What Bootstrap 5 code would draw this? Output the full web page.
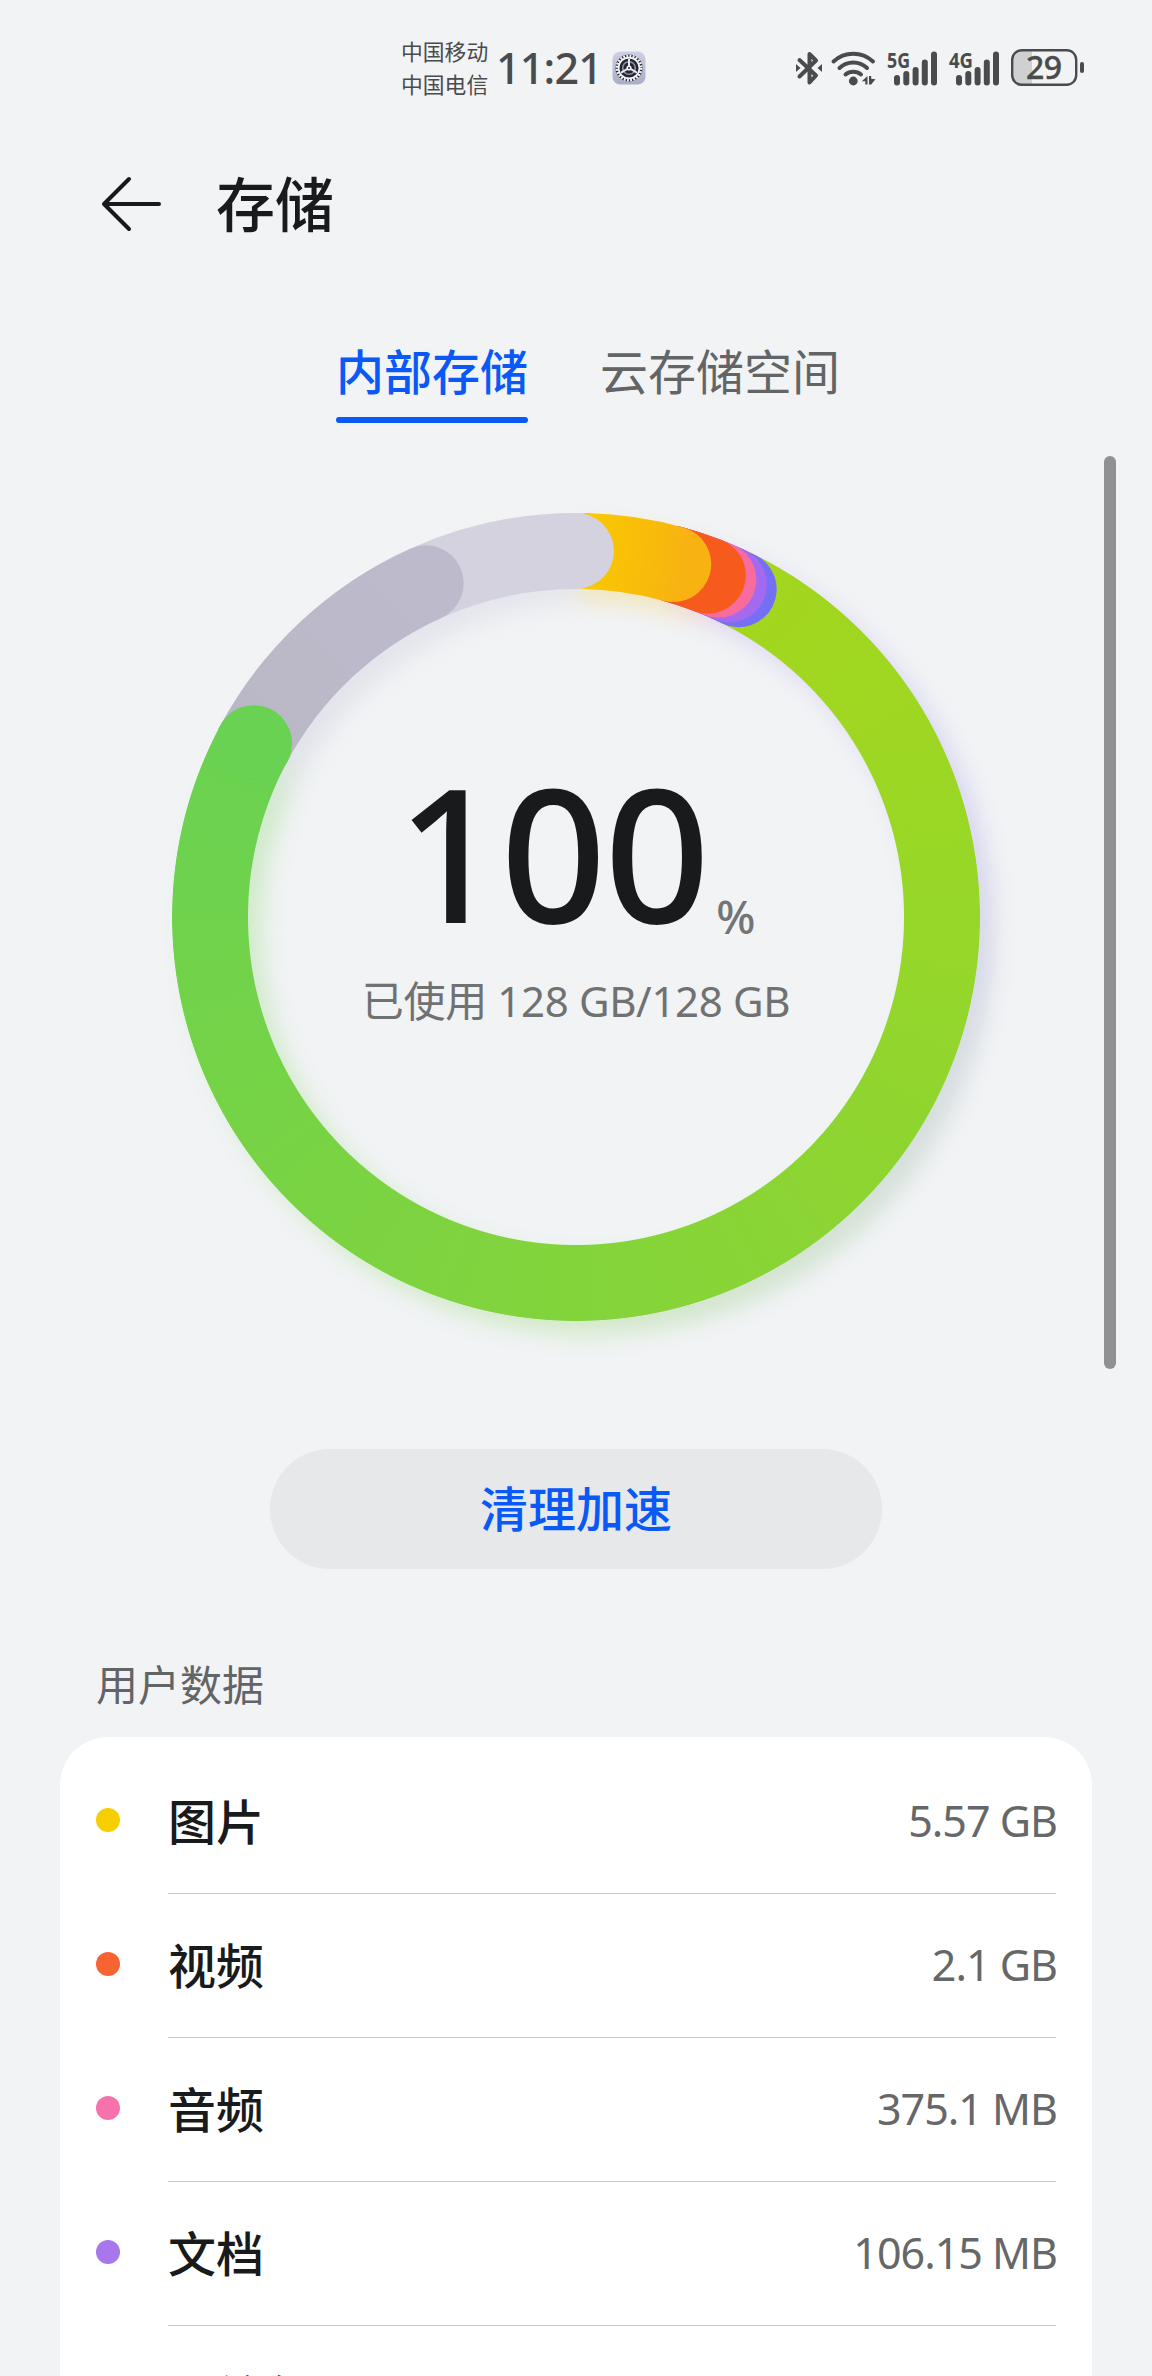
<!DOCTYPE html>
<html lang="zh-CN">
<head>
<meta charset="utf-8">
<meta name="viewport" content="width=device-width, initial-scale=1">
<title>存储</title>
<link href="https://cdn.jsdelivr.net/npm/bootstrap@5.3.0/dist/css/bootstrap.min.css" rel="stylesheet">
<style>
  body { background:#f1f3f5; font-family:"Noto Sans","Noto Sans CJK SC",sans-serif; color:#191a1b; }
  .phone { width:1152px; height:2376px; overflow:hidden; }
  .status { height:136px; padding:0 66px 0 401px; color:#4a4b4c; }
  .status svg { overflow:visible; }
  .carriers { font-size:21.8px; line-height:33px; width:90px; }
  .clock { font-size:43px; line-height:60px; font-weight:500; width:100px; margin-left:5px; letter-spacing:-.8px; }
  .title-bar { height:136px; padding-left:100px; }
  .title-bar h1 { font-size:59px; line-height:80px; font-weight:500; margin-left:53px; }
  .tabs { height:151px; padding:64px 0 0 336px; gap:72px; font-size:48px; line-height:72px; color:#626466; }
  .tabs .nav-link { padding:0; color:inherit; height:87px; }
  .tabs .nav-link.active { color:#0a59f7; font-weight:500; }
  .tabs .nav-link.active::after { content:""; display:block; height:6px; border-radius:3px; background:#0a59f7; margin-top:9px; }
  .chart-area { height:1026px; padding-top:90px; }
  .ring { width:808px; height:808px; }
  .ring-layer { inset:0; }
  .ring-mask { -webkit-mask:radial-gradient(circle at center,transparent 327.5px,#000 328.5px,#000 403.5px,transparent 404.3px); mask:radial-gradient(circle at center,transparent 327.5px,#000 328.5px,#000 403.5px,transparent 404.3px); }
  .ring-green { background:conic-gradient(transparent 24deg,#a4d61c 24deg,#9fd722 55deg,#97d728 90deg,#90d52f 120deg,#83d43b 180deg,#76d346 240deg,#6ad252 298deg,transparent 298.3deg); }
  .glow { filter:blur(11px); transform:translate(14px,14px); opacity:.25; }
  .glow-fill { height:100%; background:conic-gradient(#f6c21a 0deg,#f6c21a 12deg,#f78a5a 17deg,#a88af0 23deg,#8f80e0 75deg,#8c90c0 95deg,#86a09c 115deg,#7cb46a 145deg,#78d040 185deg,#70d24c 290deg,#b8b5cc 302deg,#c4c2d2 357deg,#f6c21a 360deg); }
  .used-block { padding-top:238px; }
  .used-number { font-size:185px; line-height:200px; font-weight:500; letter-spacing:-2px; }
  .percent { font-size:46px; line-height:60px; color:#737475; font-weight:500; margin:0 0 5px 8px; }
  .used-text { font-size:42px; line-height:60px; color:#707172; white-space:nowrap; margin-top:20px; letter-spacing:-.35px; }
  .scroll-thumb { width:12px; height:913px; border-radius:6px; background:#909193; right:36px; top:33px; }
  .btn-clean { width:612px; height:120px; font-size:48px; font-weight:500; color:#0a59f7; background:#e6e8ea; border:0; }
  .btn-clean:hover { color:#0a59f7; background:#dfe1e3; }
  .section-label { height:168px; padding:84px 0 0 96px; font-size:42px; line-height:64px; color:#626466; }
  .data-card { margin:0 60px; border:0; border-radius:48px; padding:12px 36px 0; height:800px; }
  .data-row { height:144px; }
  .dot { width:24px; height:24px; border-radius:50%; margin-right:48px; transform:translateY(-1px); }
  .row-body { height:144px; border-bottom:1px solid #c9cacc; position:relative; top:1px; font-size:48px; }
  .row-name { font-weight:500; }
  .row-value { font-size:43px; color:#666768; letter-spacing:-1px; margin-right:-1px; }
</style>
</head>
<body>
<div class="phone">

  <div class="status d-flex align-items-center">
    <div class="carriers">中国移动<br>中国电信</div>
    <div class="clock">11:21</div>
    <svg class="ms-3" width="34" height="34" viewBox="0 0 34 34">
      <defs><linearGradient id="app" x1="0" y1="0" x2="0" y2="1"><stop offset="0" stop-color="#cdd0e6"/><stop offset="1" stop-color="#a9adc9"/></linearGradient></defs>
      <rect x=".5" y=".5" width="33" height="33" rx="8" fill="url(#app)"/>
      <circle cx="17" cy="17" r="13.600" fill="#25262f"/>
      <circle cx="17" cy="17" r="12.200" fill="none" stroke="#f4f5fb" stroke-width="2.600" stroke-dasharray="1.900 1.300"/>
      <circle cx="17" cy="17" r="10.400" fill="none" stroke="#f4f5fb" stroke-width="1.600"/>
      <circle cx="17" cy="17" r="6.300" fill="none" stroke="#8f92a8" stroke-width="1.600"/>
      <path d="M17 17V7.500M17 17l-8 4.600M17 17l8 4.600" stroke="#e8e9f2" stroke-width="2"/>
      <circle cx="17" cy="17" r="2.600" fill="#f4f5fb"/><circle cx="17" cy="17" r="1" fill="#25262f"/>
    </svg>

    <div class="ms-auto d-flex align-items-center">
      <svg width="26" height="36" viewBox="0 0 26 36" fill="none" stroke="#4a4b4c" stroke-width="4" stroke-linejoin="round" stroke-linecap="round">
        <path d="M3.500 10 20 25.500 13.500 32.500V4l6.500 6.500L3.500 26.500"/>
        <path d="M0 14v8l4.500-4zM26 14v8l-4.500-4z" fill="#4a4b4c" stroke="none"/>
      </svg>
      <svg style="margin-left:9px" width="46" height="36" viewBox="0 0 46 36" fill="none" stroke="#4a4b4c" stroke-width="4" stroke-linecap="round">
        <path d="M2.500 11.500a29 29 0 0 1 39.500 0M8.500 18a20 20 0 0 1 27.500 0M14.500 24.500a12 12 0 0 1 15.500 0"/>
        <circle cx="22.300" cy="31" r="4.400" fill="#4a4b4c" stroke="none"/>
        <path d="M36.500 26v8.500h-2.200v-3.200h-3.500zM38 34.500V26h2.200v2.800l4.300.4-4.300 5.300z" fill="#4a4b4c" stroke="none"/>
      </svg>
      <svg style="margin-left:10px" width="54" height="36" viewBox="0 0 54 36" fill="#4a4b4c">
        <text x="0" y="18" font-family="Noto Sans" font-weight="700" font-size="21" textLength="23" lengthAdjust="spacingAndGlyphs">5G</text>
        <rect x="7" y="25" width="6" height="10.500" rx="3"/><rect x="16.300" y="21" width="6" height="14.500" rx="3"/><rect x="25.600" y="17" width="6" height="18.500" rx="3"/><rect x="34.800" y="9.500" width="6" height="26" rx="3"/><rect x="44" y="1.500" width="6" height="34" rx="3"/>
      </svg>
      <svg style="margin-left:8px" width="54" height="36" viewBox="0 0 54 36" fill="#4a4b4c">
        <text x="0" y="18" font-family="Noto Sans" font-weight="700" font-size="21" textLength="24" lengthAdjust="spacingAndGlyphs">4G</text>
        <rect x="7" y="25" width="6" height="10.500" rx="3"/><rect x="16.300" y="21" width="6" height="14.500" rx="3"/><rect x="25.600" y="17" width="6" height="18.500" rx="3"/><rect x="34.800" y="9.500" width="6" height="26" rx="3"/><rect x="44" y="1.500" width="6" height="34" rx="3"/>
      </svg>
      <svg style="margin-left:8px" width="75" height="38" viewBox="0 0 75 38">
        <path d="M11 1.500h10v34H11a9.500 9.500 0 0 1-9.500-9.500V11A9.500 9.500 0 0 1 11 1.500z" fill="#cfd0d2"/>
        <rect x="1.200" y="1.200" width="64" height="34.600" rx="9.500" fill="none" stroke="#4a4b4c" stroke-width="2.400"/>
        <rect x="69" y="13" width="4" height="11" rx="2" fill="#4a4b4c"/>
        <text x="15" y="30" font-family="Noto Sans" font-weight="500" font-size="32" fill="#4a4b4c" stroke="#4a4b4c" stroke-width=".4" textLength="36">29</text>
      </svg>
    </div>
  </div>

  <header class="title-bar d-flex align-items-center">
    <svg width="63" height="58" viewBox="0 0 63 58" fill="none" stroke="#191a1b" stroke-width="4" stroke-linecap="round" stroke-linejoin="round"><path d="M59 29H4L29 4M4 29l25 25"/></svg>
    <h1 class="mb-0">存储</h1>
  </header>

  <nav class="tabs nav flex-nowrap">
    <a class="nav-link active" href="#">内部存储</a>
    <a class="nav-link" href="#">云存储空间</a>
  </nav>

  <main class="chart-area position-relative">
    <div class="ring position-relative mx-auto">
      <div class="ring-layer position-absolute glow"><div class="glow-fill ring-mask"></div></div>
      <div class="ring-layer position-absolute ring-green ring-mask"></div>
      <svg class="ring-layer position-absolute" width="808" height="808" viewBox="-404 -404 808 808" fill="none" stroke-width="76">
        <defs>
          <linearGradient id="yel" gradientUnits="userSpaceOnUse" x1="0" y1="-366" x2="110" y2="-350"><stop offset=".1" stop-color="#f9c900"/><stop offset="1" stop-color="#f8b212"/></linearGradient>
          <linearGradient id="dark" gradientUnits="userSpaceOnUse" x1="-322" y1="-173" x2="-150" y2="-334"><stop offset="0" stop-color="#bab7c6"/><stop offset="1" stop-color="#bdbacc"/></linearGradient>
        </defs>
        <g stroke-linecap="round">
          <path d="M97.200-352.900A366 366 0 0 1 162.700-327.800" stroke="#756ff6"/>
          <path d="M97.200-352.900A366 366 0 0 1 152.900-332.500" stroke="#a369ee"/>
          <path d="M97.200-352.900A366 366 0 0 1 142.400-337.200" stroke="#f76b9f"/>
          <path d="M97.200-352.900A366 366 0 0 1 131.800-341.500" stroke="#f65a1d"/>
          <path d="M10-365.900A366 366 0 0 1 97.200-352.900" stroke="url(#yel)"/>
          <path d="M-150.300-333.700A366 366 0 0 1 0-366" stroke="#d4d2df"/>
          <path d="M-322.200-173.500A366 366 0 0 1-150.300-333.700" stroke="url(#dark)"/>
        </g>
        <circle cx="-322.200" cy="-173.500" r="38.300" fill="#6ad252"/>
      </svg>
      <div class="used-block ring-layer position-absolute d-flex flex-column align-items-center">
        <div class="d-flex align-items-end">
          <span class="used-number">100</span><span class="percent">%</span>
        </div>
        <div class="used-text">已使用 128 GB/128 GB</div>
      </div>
    </div>
    <div class="scroll-thumb position-absolute"></div>
  </main>

  <div class="d-flex justify-content-center">
    <button class="btn btn-clean rounded-pill" type="button">清理加速</button>
  </div>

  <div class="section-label">用户数据</div>

  <div class="card data-card">
    <div class="data-row d-flex align-items-center"><span class="dot" style="background:#f7ce00"></span><div class="row-body flex-grow-1 d-flex align-items-center justify-content-between"><span class="row-name">图片</span><span class="row-value">5.57 GB</span></div></div>
    <div class="data-row d-flex align-items-center"><span class="dot" style="background:#f86332"></span><div class="row-body flex-grow-1 d-flex align-items-center justify-content-between"><span class="row-name">视频</span><span class="row-value">2.1 GB</span></div></div>
    <div class="data-row d-flex align-items-center"><span class="dot" style="background:#f772ac"></span><div class="row-body flex-grow-1 d-flex align-items-center justify-content-between"><span class="row-name">音频</span><span class="row-value">375.1 MB</span></div></div>
    <div class="data-row d-flex align-items-center"><span class="dot" style="background:#a877ec"></span><div class="row-body flex-grow-1 d-flex align-items-center justify-content-between"><span class="row-name">文档</span><span class="row-value">106.15 MB</span></div></div>
    <div class="data-row d-flex align-items-center"><span class="dot" style="background:#756ff6"></span><div class="row-body flex-grow-1 d-flex align-items-center justify-content-between"><span class="row-name">压缩包</span></div></div>
  </div>
</div>
<script src="https://cdn.jsdelivr.net/npm/bootstrap@5.3.0/dist/js/bootstrap.bundle.min.js"></script>
</body>
</html>
